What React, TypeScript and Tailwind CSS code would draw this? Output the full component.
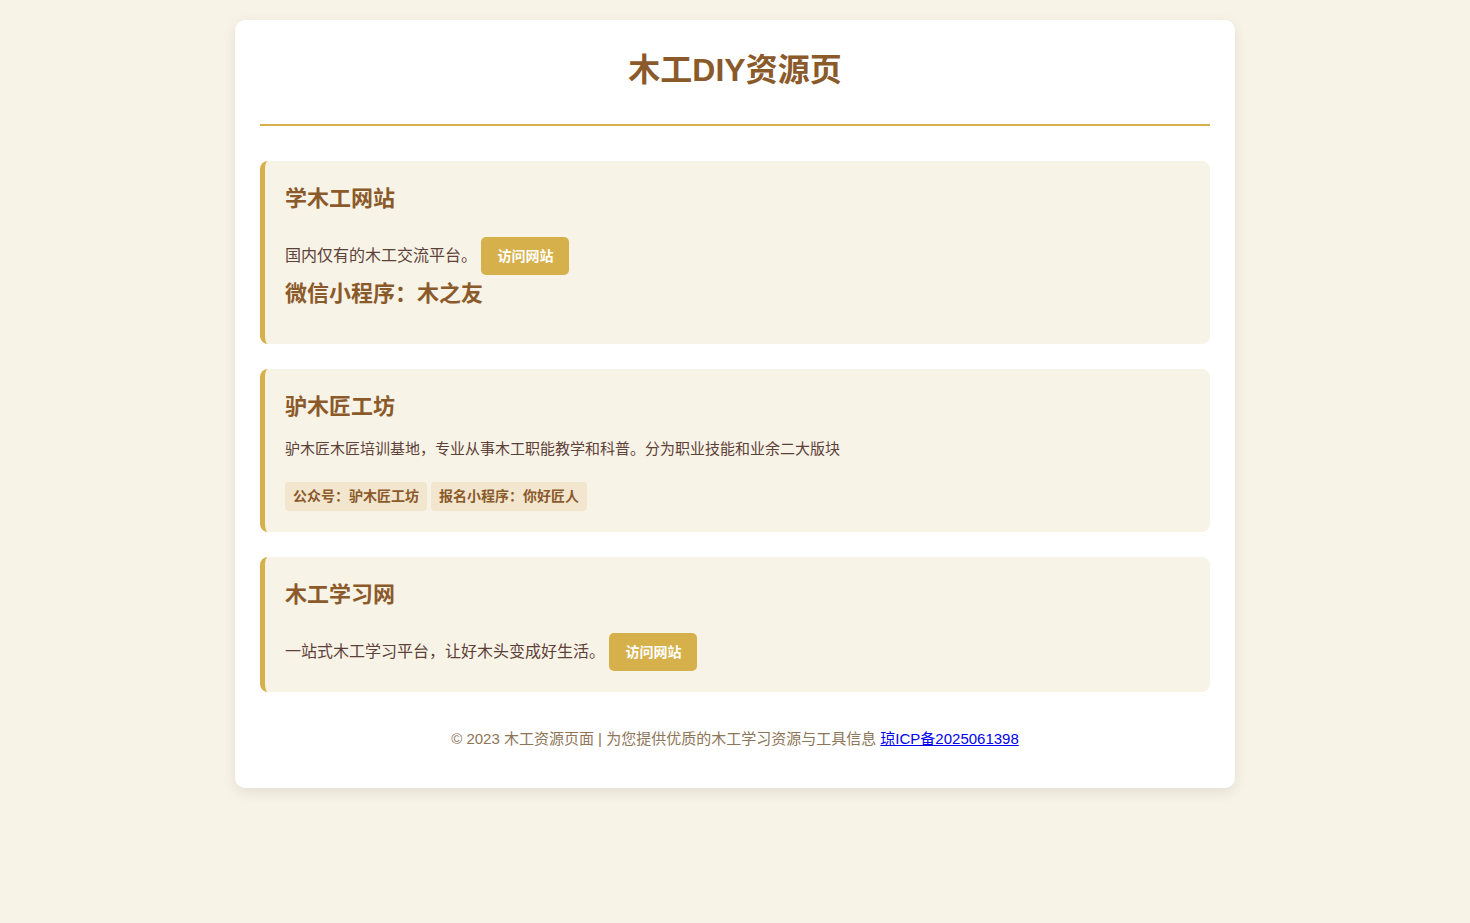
type Resource = {
  title: string;
  desc: string;
  url?: string;
  extra?: string;
  tags?: string[];
};

const resources: Resource[] = [
  {
    title: "学木工网站",
    desc: "国内仅有的木工交流平台。",
    url: "#",
    extra: "微信小程序：木之友",
  },
  {
    title: "驴木匠工坊",
    desc: "驴木匠木匠培训基地，专业从事木工职能教学和科普。分为职业技能和业余二大版块",
    tags: ["公众号：驴木匠工坊", "报名小程序：你好匠人"],
  },
  {
    title: "木工学习网",
    desc: "一站式木工学习平台，让好木头变成好生活。",
    url: "#",
  },
];

const font = "font-['Liberation_Sans','Noto_Sans_CJK_SC',sans-serif]";

function VisitButton({ href }: { href: string }) {
  return (
    <a
      href={href}
      className="inline-block h-[38px] w-[88px] rounded-[5px] bg-[#d6b14b] text-center text-[14px] font-bold leading-[38px] text-white"
    >
      访问网站
    </a>
  );
}

function ResourceCard({ item }: { item: Resource }) {
  return (
    <section className="rounded-[8px] border-l-[5px] border-[#d6b14b] bg-[#f8f3e7] px-[20px] pt-[21px] pb-[21px]">
      <h2 className="text-[22px] font-bold leading-[34px] text-[#8b5a2b]">{item.title}</h2>

      {item.url ? (
        <p className="mt-[21px] text-[16px] leading-[38px] text-[#5d4037]">
          {item.desc} <VisitButton href={item.url} />
        </p>
      ) : (
        <p className="mt-[13px] text-[15px] leading-[24px] text-[#5d4037]">{item.desc}</p>
      )}

      {item.extra && (
        <h3 className="mt-px pb-[11px] text-[22px] font-bold leading-[36px] text-[#8b5a2b]">{item.extra}</h3>
      )}

      {item.tags && (
        <div className="mt-[21px] flex gap-[4px]">
          {item.tags.map((t) => (
            <span
              key={t}
              className="rounded-[4px] bg-[#f2e6cf] px-[8px] text-[14px] font-bold leading-[29px] text-[#8b5a2b]"
            >
              {t}
            </span>
          ))}
        </div>
      )}
    </section>
  );
}

export default function App() {
  return (
    <div className={`min-h-[923px] bg-[#f8f3e7] pt-[20px] ${font}`}>
      <main className="mx-auto w-[1000px] rounded-[10px] bg-white px-[25px] pt-[25px] pb-[37px] shadow-[0_4px_14px_rgba(0,0,0,0.09)]">
        <header className="border-b-2 border-[#d6b14b] pb-[29px] text-center">
          <h1 className="text-[32px] font-bold leading-[50px] text-[#8b5a2b]">木工DIY资源页</h1>
        </header>

        <div className="mt-[35px] flex flex-col gap-[25px]">
          {resources.map((r) => (
            <ResourceCard key={r.title} item={r} />
          ))}
        </div>

        <footer className="mt-[35px] text-center text-[15px] leading-[24px] text-[#8d7558]">
          © 2023 木工资源页面 | 为您提供优质的木工学习资源与工具信息{" "}
          <a href="#" className="text-[#0000ee] underline">
            琼ICP备2025061398
          </a>
        </footer>
      </main>
    </div>
  );
}
